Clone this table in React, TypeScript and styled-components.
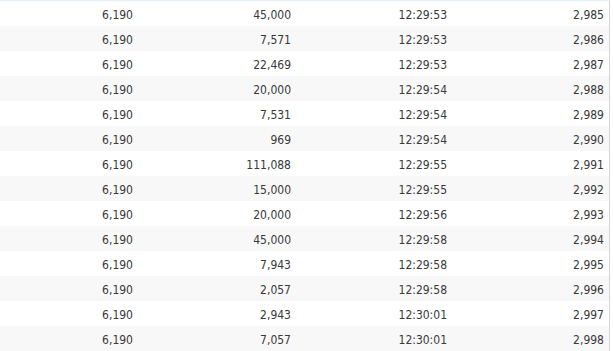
import React from "react";
import styled, { createGlobalStyle } from "styled-components";

const Global = createGlobalStyle`
  html, body { margin: 0; padding: 0; background: #ffffff; }
  body { font-family: "DejaVu Sans Condensed", "DejaVu Sans", sans-serif; }
`;

const Frame = styled.div`
  width: 613px;
  height: 351px;
  overflow: hidden;
  background: #ffffff;
`;

const Table = styled.div`
  width: 610px;
  border-top: 1px solid #e3eef9;
  border-right: 1px solid #d4d4d4;
  box-sizing: border-box;
`;

const Row = styled.div<{ $alt: boolean }>`
  display: grid;
  grid-template-columns: 138px 158px 156px 157px;
  height: 25px;
  background: ${(p) => (p.$alt ? "#f8f8f8" : "#ffffff")};
`;

const Cell = styled.div`
  display: flex;
  align-items: center;
  justify-content: flex-end;
  padding: 2px 5px 0 0;
  box-sizing: border-box;
  font-size: 12px;
  color: #383838;
  white-space: nowrap;
`;

const rows: [string, string, string, string][] = [
  ["6,190", "45,000", "12:29:53", "2,985"],
  ["6,190", "7,571", "12:29:53", "2,986"],
  ["6,190", "22,469", "12:29:53", "2,987"],
  ["6,190", "20,000", "12:29:54", "2,988"],
  ["6,190", "7,531", "12:29:54", "2,989"],
  ["6,190", "969", "12:29:54", "2,990"],
  ["6,190", "111,088", "12:29:55", "2,991"],
  ["6,190", "15,000", "12:29:55", "2,992"],
  ["6,190", "20,000", "12:29:56", "2,993"],
  ["6,190", "45,000", "12:29:58", "2,994"],
  ["6,190", "7,943", "12:29:58", "2,995"],
  ["6,190", "2,057", "12:29:58", "2,996"],
  ["6,190", "2,943", "12:30:01", "2,997"],
  ["6,190", "7,057", "12:30:01", "2,998"],
];

export default function App() {
  return (
    <Frame>
      <Global />
      <Table>
        {rows.map((r, i) => (
          <Row key={i} $alt={i % 2 === 1}>
            {r.map((c, j) => (
              <Cell key={j}>{c}</Cell>
            ))}
          </Row>
        ))}
      </Table>
    </Frame>
  );
}
